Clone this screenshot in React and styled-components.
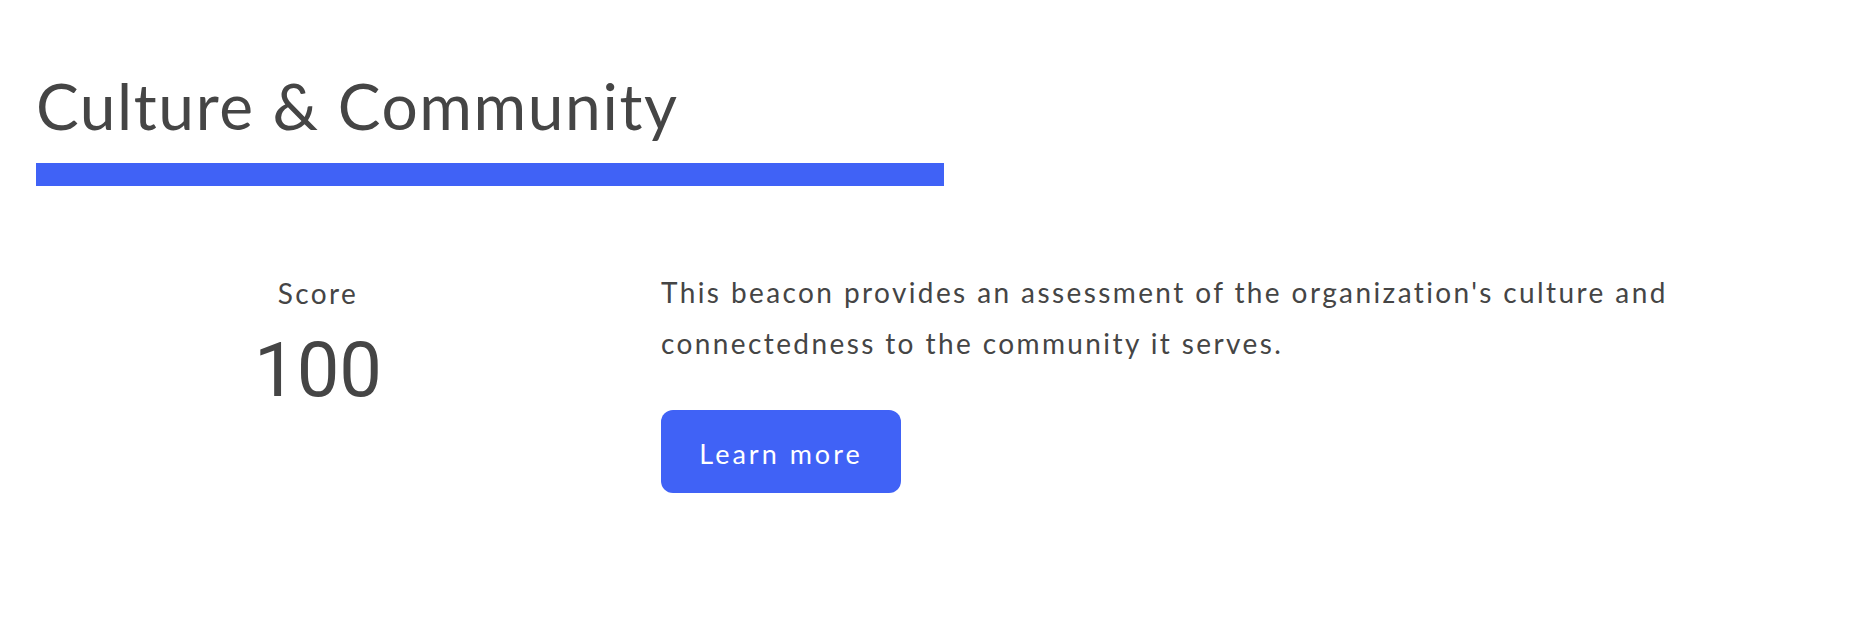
import React from "react";
import styled, { createGlobalStyle } from "styled-components";

const GlobalStyle = createGlobalStyle`
  body {
    margin: 0;
    background: #fff;
    font-family: Lato, "Open Sans", sans-serif;
    color: #454545;
  }
`;

const Section = styled.section`
  padding: 68px 36px 0;
`;

const Title = styled.h2`
  margin: 0;
  font-size: 64px;
  line-height: 1.2;
  font-weight: 400;
  letter-spacing: 1.6px;
  color: #454545;
`;

const Underline = styled.div`
  width: 908px;
  height: 23px;
  margin-top: 18px;
  background: #4062f6;
`;

const Row = styled.div`
  display: flex;
  gap: 61px;
  margin-top: 81px;
`;

const ScoreCol = styled.div`
  width: 564px;
  display: flex;
  flex-direction: column;
  align-items: center;
`;

const ScoreLabel = styled.div`
  font-size: 28px;
  line-height: 52px;
  letter-spacing: 2.4px;
`;

const ScoreValue = styled.div`
  margin-top: 13px;
  font-family: Roboto, "Liberation Sans", sans-serif;
  font-size: 76px;
  line-height: 1;
`;

const InfoCol = styled.div`
  max-width: 1080px;
`;

const Text = styled.p`
  margin: 0;
  font-size: 28px;
  line-height: 51px;
  letter-spacing: 2.4px;
`;

const Button = styled.button`
  margin-top: 41px;
  width: 240px;
  height: 83px;
  padding: 4px 0 0;
  border: 0;
  border-radius: 12px;
  background: #4062f6;
  color: #fff;
  font-family: Lato, "Open Sans", sans-serif;
  font-size: 27px;
  letter-spacing: 3px;
  cursor: pointer;
`;

export default function App() {
  return (
    <>
      <GlobalStyle />
      <Section>
        <Title>Culture &amp; Community</Title>
        <Underline />
        <Row>
          <ScoreCol>
            <ScoreLabel>Score</ScoreLabel>
            <ScoreValue>100</ScoreValue>
          </ScoreCol>
          <InfoCol>
            <Text>
              This beacon provides an assessment of the organization's culture
              and connectedness to the community it serves.
            </Text>
            <Button>Learn more</Button>
          </InfoCol>
        </Row>
      </Section>
    </>
  );
}
